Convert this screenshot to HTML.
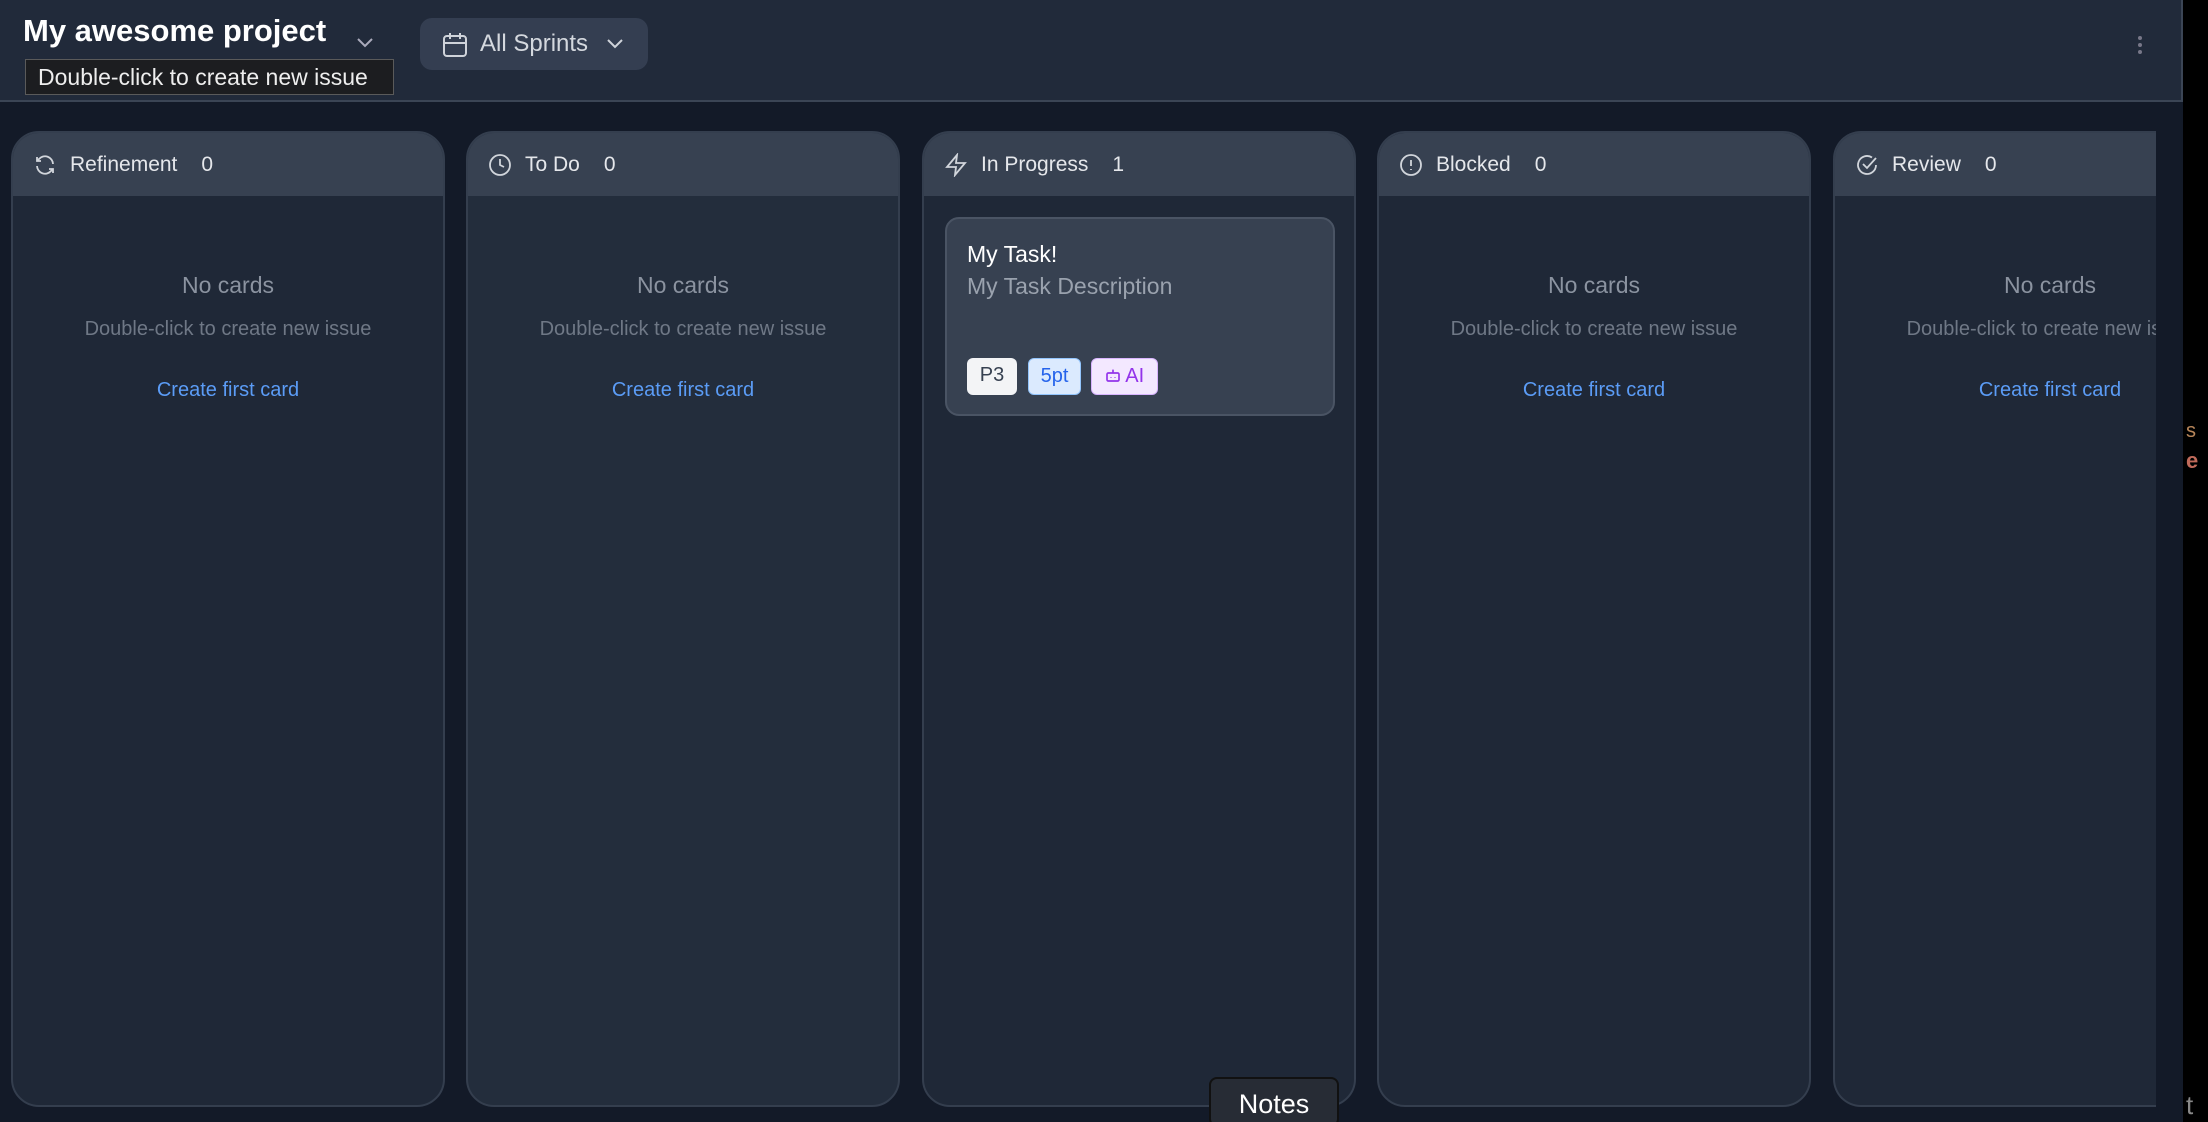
<!DOCTYPE html>
<html><head><meta charset="utf-8"><style>
*{box-sizing:border-box;margin:0;padding:0}
html,body{width:2208px;height:1122px;overflow:hidden}
body{background:#000;font-family:"Liberation Sans",sans-serif;position:relative}
.app{position:absolute;left:0;top:0;width:2183px;height:1122px;background:#131a28;overflow:hidden}
.hdr{position:absolute;left:0;top:0;width:2183px;height:102px;background:#212a3a;border-bottom:2px solid #3b4555;border-right:2px solid #3b4555}
.title{position:absolute;left:23px;top:13px;font-size:31px;font-weight:bold;color:#fff}
.tip{position:absolute;left:25px;top:59px;width:369px;height:36px;background:#1c1d20;border:1px solid #5a5a5a;color:#eee;font-size:23px;line-height:34px;padding-left:12px}
.spr{position:absolute;left:420px;top:18px;width:228px;height:52px;background:#343e51;border-radius:12px;color:#d4d8de;font-size:24px}
.col{position:absolute;top:131px;width:434px;height:976px;border:2px solid #343e4e;border-radius:28px;background:#1f2837;overflow:hidden}
.ch{height:63px;background:#374151;color:#e5e7eb;font-size:21px;display:flex;align-items:center;padding-left:20px}
.ch svg{margin-right:13px}
.ch .n{margin-left:24px}
.empty{text-align:center;position:absolute;left:0;width:430px}
.nc{top:139px;font-size:23px;color:#8b93a0}
.dc{top:185px;font-size:20px;color:#6f7886;white-space:nowrap}
.cf{top:246px;font-size:20px;color:#5b9cf6}
.card{position:absolute;left:21px;top:84px;width:390px;height:199px;background:#374151;border:2px solid #4a5464;border-radius:14px}
.b{position:absolute;top:139px;height:37px;border-radius:6px;font-size:20px;line-height:35px;text-align:center}
</style></head><body>
<div class="app">
<div class="hdr">
<div class="title">My awesome project</div>
<svg style="position:absolute;left:356px;top:36px" width="18" height="12" viewBox="0 0 18 12"><path d="M2 3l7 7 7-7" fill="none" stroke="#aab" stroke-width="2"/></svg>
<div class="spr">
<svg style="position:absolute;left:22px;top:13px" width="26" height="28" viewBox="0 0 26 28"><rect x="2" y="5" width="22" height="20" rx="3" fill="none" stroke="#cfd3da" stroke-width="2"/><path d="M2 12h22M8 2v6M18 2v6" stroke="#cfd3da" stroke-width="2"/></svg>
<span style="position:absolute;left:60px;top:12px">All Sprints</span>
<svg style="position:absolute;left:186px;top:20px" width="18" height="12" viewBox="0 0 18 12"><path d="M2 2l7 7 7-7" fill="none" stroke="#cfd3da" stroke-width="2"/></svg>
</div>
<div class="tip">Double-click to create new issue</div>
<svg style="position:absolute;left:2137px;top:35px" width="6" height="20"><circle cx="3" cy="3" r="2" fill="#778"/><circle cx="3" cy="10" r="2" fill="#778"/><circle cx="3" cy="17" r="2" fill="#778"/></svg>
</div>

<div class="col" style="left:11px">
<div class="ch"><svg width="24" height="24" viewBox="0 0 24 24" fill="none" stroke="#d1d5db" stroke-width="1.8"><path d="M20 11a8 8 0 0 0-14-5l-2 2M4 4v4h4M4 13a8 8 0 0 0 14 5l2-2M20 20v-4h-4"/></svg>Refinement<span class="n">0</span></div>
<div class="empty nc">No cards</div><div class="empty dc">Double-click to create new issue</div><div class="empty cf">Create first card</div>
</div>
<div class="col" style="left:466px;background:#232d3c">
<div class="ch"><svg width="24" height="24" viewBox="0 0 24 24" fill="none" stroke="#d1d5db" stroke-width="1.8"><circle cx="12" cy="12" r="10"/><path d="M12 6v6l4 2"/></svg>To Do<span class="n">0</span></div>
<div class="empty nc">No cards</div><div class="empty dc">Double-click to create new issue</div><div class="empty cf">Create first card</div>
</div>
<div class="col" style="left:922px">
<div class="ch"><svg width="24" height="24" viewBox="0 0 24 24" fill="none" stroke="#d1d5db" stroke-width="1.8"><path d="M13 2L3 14h9l-1 8 10-12h-9l1-8z"/></svg>In Progress<span class="n">1</span></div>
<div class="card">
<div style="position:absolute;left:20px;top:22px;font-size:23px;color:#fff">My Task!</div>
<div style="position:absolute;left:20px;top:54px;font-size:23px;color:#9aa2ae">My Task Description</div>
<div class="b" style="left:20px;width:50px;background:#f3f4f6;color:#374151">P3</div>
<div class="b" style="left:81px;width:53px;background:#dbeafe;color:#2563eb;border:1px solid #93c5fd">5pt</div>
<div class="b" style="left:144px;width:67px;background:#f3e8ff;color:#9333ea;border:1px solid #d8b4fe"><svg width="16" height="16" viewBox="0 0 24 24" fill="none" stroke="#9333ea" stroke-width="2.5" style="vertical-align:-1px"><rect x="3" y="9" width="18" height="12" rx="2"/><path d="M12 4v5M9 15v1M15 15v1"/></svg> AI</div>
</div>
</div>
<div class="col" style="left:1377px">
<div class="ch"><svg width="24" height="24" viewBox="0 0 24 24" fill="none" stroke="#d1d5db" stroke-width="1.8"><circle cx="12" cy="12" r="10"/><path d="M12 7v6M12 16v1"/></svg>Blocked<span class="n">0</span></div>
<div class="empty nc">No cards</div><div class="empty dc">Double-click to create new issue</div><div class="empty cf">Create first card</div>
</div>
<div class="col" style="left:1833px;width:323px;border-right:none;border-top-right-radius:0;border-bottom-right-radius:0">
<div class="ch"><svg width="24" height="24" viewBox="0 0 24 24" fill="none" stroke="#d1d5db" stroke-width="1.8"><path d="M21 12a9 9 0 1 1-4-7.5"/><path d="M8 11l4 4 9-10"/></svg>Review<span class="n">0</span></div>
<div class="empty nc">No cards</div><div class="empty dc">Double-click to create new issue</div><div class="empty cf">Create first card</div>
</div>
<div style="position:absolute;left:1209px;top:1077px;width:130px;height:50px;background:#272c35;border:2px solid #111;border-radius:8px;color:#fff;font-size:27px;text-align:center;line-height:50px">Notes</div>
</div>
<div style="position:absolute;left:2186px;top:420px;color:#b8865a;font-size:20px">s</div>
<div style="position:absolute;left:2186px;top:448px;color:#c06a5a;font-size:22px;font-weight:bold">e</div>
<div style="position:absolute;left:2186px;top:1090px;color:#888;font-size:26px">t</div>
</body></html>
